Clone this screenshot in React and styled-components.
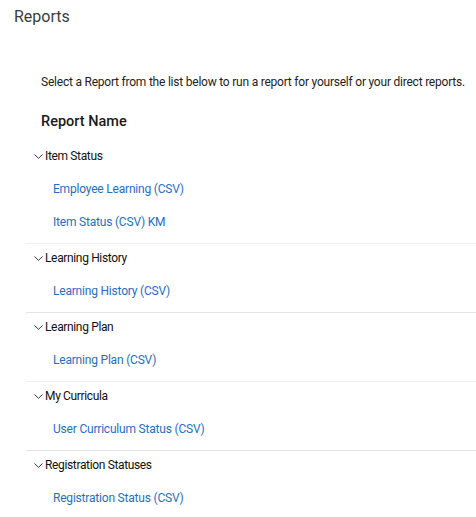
import React from 'react'
import styled, { createGlobalStyle } from 'styled-components'

const GlobalStyle = createGlobalStyle`
  body {
    margin: 0;
    background: #ffffff;
    font-family: Roboto, "Liberation Sans", Arial, sans-serif;
    color: #1d1d1d;
  }
`;

const Page = styled.div`
  width: 476px;
  height: 517px;
  overflow: hidden;
  background: white;
`;

const Title = styled.h1`
  margin: 0;
  padding: 7px 0 0 14px;
  font-size: 16px;
  line-height: 20px;
  font-weight: 400;
  color: #3a3d40;
`;

const Intro = styled.p`
  margin: 0;
  padding: 47px 0 0 41px;
  font-size: 12px;
  line-height: 16px;
  letter-spacing: -0.22px;
  color: #1d1d1d;
  white-space: nowrap;
`;

const ColumnHead = styled.div`
  padding: 22px 0 0 41px;
  font-size: 14.5px;
  line-height: 20px;
  font-weight: 500;
  color: #1a1a1a;
`;

const List = styled.div`
  display: flex;
  flex-direction: column;
  margin: 9px 0 0 26px;
`;

const Section = styled.section`
  display: flex;
  flex-direction: column;
  border-top: 1px solid ${p => (p.$first ? 'transparent' : p.$faint ? '#f1f1f1' : '#e4e4e4')};
  padding-bottom: 5px;
`;

const Header = styled.div`
  display: flex;
  align-items: center;
  gap: 1px;
  height: 28px;
  padding-left: 7px;
  font-size: 12px;
  letter-spacing: -0.35px;
  color: #111;
`;

const Links = styled.div`
  display: flex;
  flex-direction: column;
  padding-top: 2px;
`;

const Link = styled.a`
  display: flex;
  align-items: center;
  height: 33px;
  padding-left: 27px;
  font-size: 12px;
  letter-spacing: -0.2px;
  color: #1f6fc5;
  text-decoration: none;
  cursor: pointer;
`;

const Chevron = () => (
  <svg width="11" height="7" viewBox="0 0 11 7" style={{ display: 'block' }}>
    <path d="M1.5 1.5 L5.5 5.3 L9.5 1.5" fill="none" stroke="#222" strokeWidth="0.9" />
  </svg>
);

const sections = [
  { name: 'Item Status', links: ['Employee Learning (CSV)', 'Item Status (CSV) KM'] },
  { name: 'Learning History', links: ['Learning History (CSV)'], faint: true },
  { name: 'Learning Plan', links: ['Learning Plan (CSV)'] },
  { name: 'My Curricula', links: ['User Curriculum Status (CSV)'], faint: true },
  { name: 'Registration Statuses', links: ['Registration Status (CSV)'] },
];

export default function App() {
  return (
    <Page>
      <GlobalStyle />
      <Title>Reports</Title>
      <Intro>Select a Report from the list below to run a report for yourself or your direct reports.</Intro>
      <ColumnHead>Report Name</ColumnHead>
      <List>
        {sections.map((s, i) => (
          <Section key={s.name} $first={i === 0} $faint={s.faint}>
            <Header>
              <Chevron />
              {s.name}
            </Header>
            <Links>
              {s.links.map(l => (
                <Link key={l}>{l}</Link>
              ))}
            </Links>
          </Section>
        ))}
      </List>
    </Page>
  );
}
